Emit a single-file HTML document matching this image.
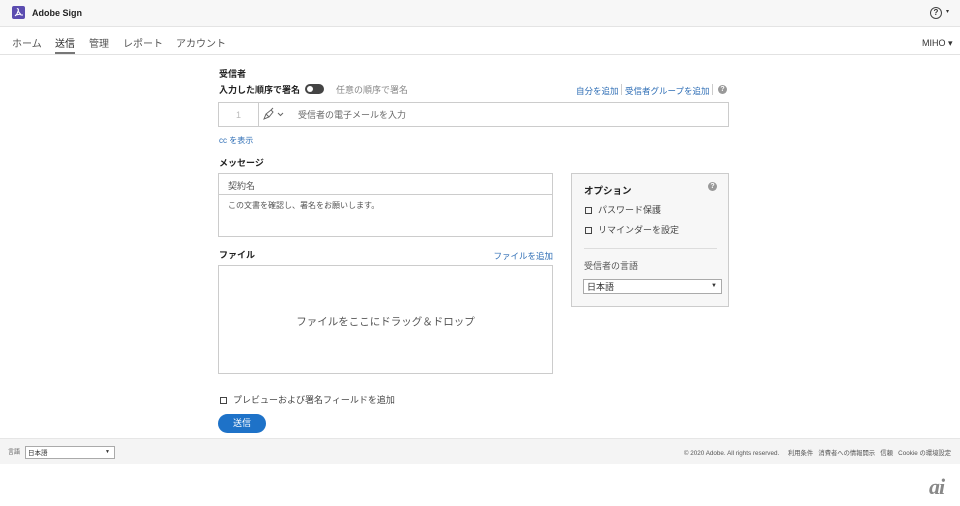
<!DOCTYPE html>
<html><head><meta charset="utf-8"><style>
*{box-sizing:border-box;margin:0;padding:0}
body{width:960px;height:506px;background:#fff;font-family:"Liberation Sans","Noto Sans CJK JP",sans-serif;color:#333;position:relative;overflow:hidden;font-size:9px}
.a{position:absolute;white-space:nowrap;line-height:1.5}
.t{margin-top:2px}
.blue{color:#2d6db5}
.gray{color:#888}
.cb{display:inline-block;width:7px;height:7px;border:1.3px solid #444;margin-right:6px;vertical-align:-1px}
</style></head><body>
<div class="a" style="left:0;top:0;width:960px;height:27px;background:#f7f7f7;border-bottom:1px solid #e4e4e4"></div>
<div class="a" style="left:12px;top:6px;width:13px;height:13px;background:#5b4cb0;border-radius:2px"></div>
<svg class="a" style="left:12px;top:6px" width="13" height="13" viewBox="0 0 13 13"><path d="M5 3 Q6 2 6.5 4 L5 8 L3 10 M6 5 L9 9 L11 9 M4 9 L9 8" stroke="#fff" stroke-width="1.1" fill="none"/></svg>
<div class="a t" style="left:32px;top:5px;font-size:9px;font-weight:bold;color:#222">Adobe Sign</div>
<div class="a" style="left:930px;top:7px;width:12px;height:12px;border:1.3px solid #444;border-radius:50%;font-size:8px;text-align:center;line-height:10px;font-weight:bold">?</div>
<div class="a" style="left:946px;top:8px;font-size:6px">▾</div>
<div class="a" style="left:0;top:54px;width:960px;height:1px;background:#e2e2e2"></div>
<div class="a t" style="left:12px;top:35px;font-size:10px;color:#555">ホーム</div>
<div class="a t" style="left:55px;top:35px;font-size:10px;color:#222">送信</div>
<div class="a" style="left:55px;top:52px;width:20px;height:2px;background:#777"></div>
<div class="a t" style="left:89px;top:35px;font-size:10px;color:#555">管理</div>
<div class="a t" style="left:123px;top:35px;font-size:10px;color:#555">レポート</div>
<div class="a t" style="left:176px;top:35px;font-size:10px;color:#555">アカウント</div>
<div class="a t" style="left:922px;top:35px;font-size:9px;color:#333">MIHO ▾</div>

<div class="a t" style="left:219px;top:66px;font-weight:bold;color:#222">受信者</div>
<div class="a t" style="left:219px;top:82px;font-weight:bold;color:#222">入力した順序で署名</div>
<div class="a" style="left:305px;top:84px;width:19px;height:10px;background:#444;border-radius:5px"></div>
<div class="a" style="left:307px;top:86px;width:6px;height:6px;background:#fff;border-radius:50%"></div>
<div class="a gray t" style="left:336px;top:82px">任意の順序で署名</div>
<div class="a blue t" style="left:576px;top:83px;font-size:8.5px">自分を追加</div>
<div class="a" style="left:621px;top:84px;width:1px;height:11px;background:#ccc"></div>
<div class="a blue t" style="left:625px;top:83px;font-size:8.5px">受信者グループを追加</div>
<div class="a" style="left:712px;top:84px;width:1px;height:11px;background:#ccc"></div>
<div class="a" style="left:718px;top:85px;width:9px;height:9px;background:#999;border-radius:50%;color:#fff;font-size:7px;text-align:center;line-height:9px;font-weight:bold">?</div>
<div class="a" style="left:218px;top:102px;width:511px;height:25px;border:1px solid #ccc"></div>
<div class="a" style="left:258px;top:102px;width:1px;height:25px;background:#ccc"></div>
<div class="a t" style="left:236px;top:107px;color:#bbb">1</div>
<svg class="a" style="left:262px;top:107px" width="24" height="14" viewBox="0 0 24 14"><path d="M2 12 L4 7 L9 3 L11 5 L7 10 Z M4 7 L7 10 M9 3 L11 1" stroke="#666" fill="none" stroke-width="1"/><path d="M16 6 L18.5 8.5 L21 6" stroke="#666" fill="none"/></svg>
<div class="a t" style="left:298px;top:107px;color:#666">受信者の電子メールを入力</div>
<div class="a blue t" style="left:219px;top:133px;font-size:8px">cc を表示</div>

<div class="a t" style="left:219px;top:155px;font-weight:bold;color:#222">メッセージ</div>
<div class="a" style="left:218px;top:173px;width:335px;height:64px;border:1px solid #ccc"></div>
<div class="a" style="left:218px;top:194px;width:335px;height:1px;background:#ccc"></div>
<div class="a t" style="left:228px;top:178px;color:#555">契約名</div>
<div class="a t" style="left:228px;top:198px;font-size:8px;color:#555">この文書を確認し、署名をお願いします。</div>

<div class="a t" style="left:219px;top:247px;font-weight:bold;color:#222">ファイル</div>
<div class="a blue t" style="right:407px;top:248px;font-size:8.5px">ファイルを追加</div>
<div class="a" style="left:218px;top:265px;width:335px;height:109px;border:1px solid #ccc"></div>
<div class="a t" style="left:218px;top:313px;width:335px;text-align:center;font-size:10.5px;color:#555">ファイルをここにドラッグ＆ドロップ</div>

<div class="a" style="left:571px;top:173px;width:158px;height:134px;border:1px solid #ccc;background:#f7f7f7"></div>
<div class="a t" style="left:584px;top:183px;font-weight:bold;color:#222;font-size:9.5px">オプション</div>
<div class="a" style="left:708px;top:182px;width:9px;height:9px;background:#999;border-radius:50%;color:#fff;font-size:7px;text-align:center;line-height:9px;font-weight:bold">?</div>
<div class="a t" style="left:585px;top:202px;color:#444"><span class="cb"></span>パスワード保護</div>
<div class="a t" style="left:585px;top:222px;color:#444"><span class="cb"></span>リマインダーを設定</div>
<div class="a" style="left:584px;top:248px;width:133px;height:1px;background:#ddd"></div>
<div class="a t" style="left:584px;top:258px;color:#555">受信者の言語</div>
<div class="a" style="left:583px;top:279px;width:139px;height:15px;border:1px solid #aaa;background:#fff;padding:1px 3px 0;line-height:13px;color:#333">日本語<span style="position:absolute;right:4px;top:0;font-size:6px">▼</span></div>

<div class="a t" style="left:220px;top:392px;color:#444"><span class="cb"></span>プレビューおよび署名フィールドを追加</div>
<div class="a" style="left:218px;top:414px;width:48px;height:19px;background:#1e72c8;border-radius:10px;color:#fff;text-align:center;line-height:19px;font-size:9px">送信</div>

<div class="a" style="left:0;top:438px;width:960px;height:26px;background:#f4f4f4;border-top:1px solid #e6e6e6"></div>
<div class="a t" style="left:8px;top:447px;font-size:6px;color:#555">言語</div>
<div class="a" style="left:25px;top:446px;width:90px;height:13px;border:1px solid #aaa;background:#fff;font-size:6.5px;padding:1px 2px 0;line-height:11px;color:#333">日本語<span style="position:absolute;right:4px;top:0;font-size:5px">▼</span></div>
<div class="a t" style="right:9px;top:447px;font-size:6.3px;color:#555">© 2020 Adobe. All rights reserved.&nbsp;&nbsp;&nbsp;&nbsp;&nbsp;利用条件&nbsp;&nbsp;&nbsp;消費者への情報開示&nbsp;&nbsp;&nbsp;信頼&nbsp;&nbsp;&nbsp;Cookie の環境設定</div>
<div class="a" style="left:929px;top:470px;font-size:22px;font-style:italic;font-weight:bold;color:#888;font-family:'Liberation Serif',serif;letter-spacing:-1px">ai</div>
</body></html>
